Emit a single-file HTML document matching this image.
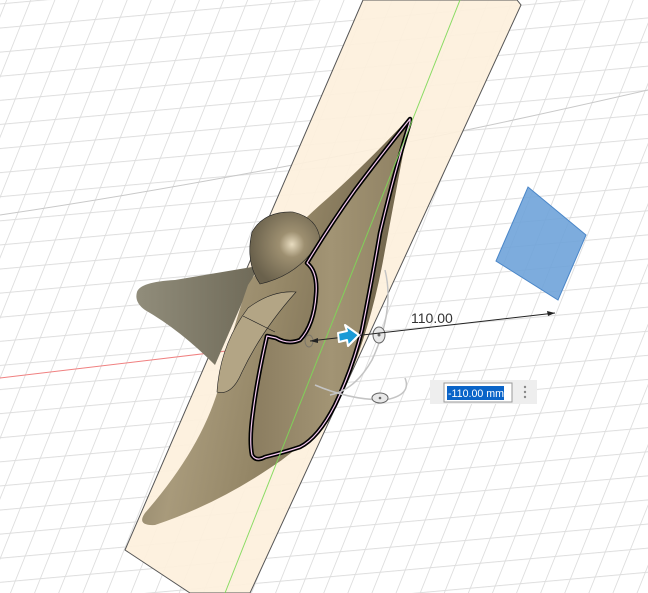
<!DOCTYPE html>
<html><head><meta charset="utf-8"><style>
html,body{margin:0;padding:0;background:#fff;width:648px;height:593px;overflow:hidden}
</style></head><body>
<svg width="648" height="593" viewBox="0 0 648 593" xmlns="http://www.w3.org/2000/svg" style="display:block">
<defs>
<pattern id="g" width="25" height="25" patternUnits="userSpaceOnUse" patternTransform="matrix(1,-0.09,-0.4,1,5,3)">
<path d="M0 0.5H25M0.5 0V25" stroke="#dedede" stroke-width="1" fill="none"/>
</pattern>
<linearGradient id="bz" x1="0" y1="0" x2="1" y2="0.3">
<stop offset="0" stop-color="#7a705a"/><stop offset="0.35" stop-color="#a89a7b"/><stop offset="0.6" stop-color="#958767"/><stop offset="1" stop-color="#6e624a"/>
</linearGradient>
<linearGradient id="in" x1="0" y1="0" x2="1" y2="0">
<stop offset="0" stop-color="#8a7c5f"/><stop offset="0.5" stop-color="#a29474"/><stop offset="1" stop-color="#8e8062"/>
</linearGradient>
<radialGradient id="dome" cx="0.6" cy="0.45" r="0.6">
<stop offset="0" stop-color="#e8dcc0"/><stop offset="0.3" stop-color="#9d8f70"/><stop offset="1" stop-color="#6a614c"/>
</radialGradient>
<linearGradient id="fin" x1="0" y1="0" x2="1" y2="0">
<stop offset="0" stop-color="#918d7b"/><stop offset="1" stop-color="#6f6a58"/>
</linearGradient>
</defs>
<rect width="648" height="593" fill="url(#g)"/>
<path d="M0 215 Q300 170 648 90" stroke="#c8c8c8" fill="none"/>
<polygon points="363,0 517,0 521,5 250,593 190,593 125,550" fill="#fdf0dc" fill-opacity="0.92" stroke="#555" stroke-width="1"/>
<line x1="0" y1="378" x2="310" y2="341" stroke="#f08080" stroke-width="1"/>
<polygon points="528,187 586,235 558,300 496,261" fill="#6fa3d9" fill-opacity="0.9" stroke="#4a86c8" stroke-width="1"/>
<path d="M137,292 Q140,282 175,280 L258,266 L215,365 Q180,330 145,310 Q134,302 137,292Z" fill="url(#fin)"/>
<path d="M410,117 Q360,170 320,205 Q270,250 248,285 Q232,330 218,390 Q200,450 145,513 Q136,526 155,525 Q215,505 270,468 Q315,440 345,388 Q372,325 385,250 Q400,170 410,117Z" fill="url(#bz)"/>
<path d="M252,232 Q264,211 293,212 Q318,218 320,240 Q300,275 260,284 Q245,262 252,232Z" fill="url(#dome)" stroke="#222" stroke-width="0.6"/>
<path d="M217,392 Q220,345 248,308 Q272,290 296,292 Q262,330 242,372 Q232,396 217,392Z" fill="#b3a585" stroke="#222" stroke-width="0.6"/>
<path d="M243,316 L275,332" stroke="#222" stroke-width="0.6"/>
<path d="M410,119 Q385,150 355,190 Q330,225 307,263 Q318,272 316,295 Q314,325 300,340 Q288,345 276,338 L267,336 Q257,380 253,412 Q249,440 252,455 Q256,462 265,457 Q285,452 300,447 Q318,438 335,405 Q352,370 362,330 Q372,280 380,233 Q395,170 410,122Z" fill="url(#in)" stroke="#000" stroke-width="4.5" stroke-linejoin="round"/>
<path d="M410,119 Q385,150 355,190 Q330,225 307,263 Q318,272 316,295 Q314,325 300,340 Q288,345 276,338 L267,336 Q257,380 253,412 Q249,440 252,455 Q256,462 265,457 Q285,452 300,447 Q318,438 335,405 Q352,370 362,330 Q372,280 380,233 Q395,170 410,122Z" fill="none" stroke="#f4c8f0" stroke-width="1.2" stroke-linejoin="round"/>
<line x1="460" y1="0" x2="225" y2="593" stroke="#7ed957" stroke-width="1" opacity="0.9"/>
<path d="M385,270 Q395,310 372,360 Q355,390 330,395" stroke="#c4c4c4" stroke-width="1.5" fill="none"/>
<path d="M405,378 Q412,395 385,400 Q350,400 315,385" stroke="#c4c4c4" stroke-width="1.5" fill="none"/>
<ellipse cx="379" cy="335" rx="6" ry="8" fill="#e8e8e8" stroke="#666"/>
<circle cx="379" cy="335" r="1.5" fill="#666"/>
<ellipse cx="380" cy="398" rx="8" ry="5" fill="#e8e8e8" stroke="#666"/>
<circle cx="380" cy="398" r="1.3" fill="#666"/>
<ellipse cx="309" cy="341" rx="4" ry="6" fill="none" stroke="#666" opacity="0.6"/>
<line x1="310" y1="341" x2="555" y2="313" stroke="#222" stroke-width="1"/>
<polygon points="555,313 547,311 548,316" fill="#222"/>
<polygon points="310,341 318,338 318,343" fill="#222"/>
<text x="411" y="323" font-family="Liberation Sans, sans-serif" font-size="14" fill="#333">110.00</text>
<path d="M338,333 L347,331 L345,325 L359,335 L348,346 L347,340 L339,342Z" fill="#1a9ad6" stroke="#fff" stroke-width="2" stroke-linejoin="round"/>
<rect x="430" y="380" width="107" height="24" fill="#eeeeee"/>
<rect x="444" y="383" width="68" height="19" fill="#fff" stroke="#999"/>
<rect x="447" y="386" width="57" height="14" fill="#0a64c8"/>
<text x="448" y="397" font-family="Liberation Sans, sans-serif" font-size="11" textLength="56" lengthAdjust="spacingAndGlyphs" fill="#fff">-110.00 mm</text>
<circle cx="525" cy="387" r="1.2" fill="#888"/><circle cx="525" cy="392" r="1.2" fill="#888"/><circle cx="525" cy="397" r="1.2" fill="#888"/>
</svg>
</body></html>
